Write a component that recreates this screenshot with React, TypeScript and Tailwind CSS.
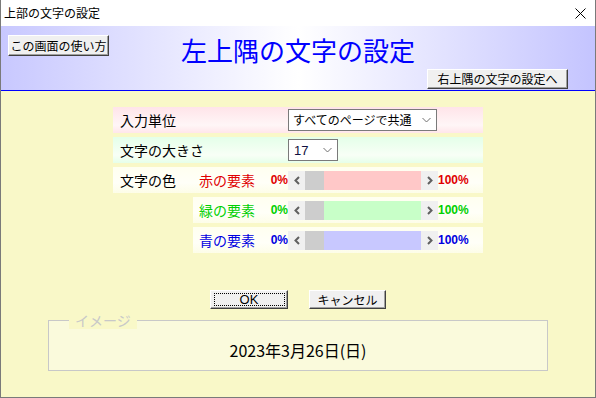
import React from "react";

const JP = "font-['Noto_Sans_CJK_JP',sans-serif]";
const AR = "font-['Liberation_Sans',Arial,sans-serif]";

function Chev({ dir }: { dir: "l" | "r" }) {
  return (
    <svg width="8" height="9" viewBox="0 0 8 9">
      <polyline
        points={dir === "l" ? "6,1 2.5,4.5 6,8" : "2,1 5.5,4.5 2,8"}
        fill="none"
        stroke="#606060"
        strokeWidth="2"
      />
    </svg>
  );
}

function DownChev() {
  return (
    <svg width="9" height="6" viewBox="0 0 9 6">
      <polyline points="0.5,1 4.5,5 8.5,1" fill="none" stroke="#707070" strokeWidth="1" />
    </svg>
  );
}

function ScrollBar({ track }: { track: string }) {
  return (
    <div className="flex h-[19px] w-[150px]">
      <div className="flex w-[17px] items-center justify-center bg-[#f0f0f0]">
        <Chev dir="l" />
      </div>
      <div className="w-[19px] bg-[#cdcdcd]" />
      <div className={`flex-1 ${track}`} />
      <div className="flex w-[17px] items-center justify-center bg-[#f0f0f0]">
        <Chev dir="r" />
      </div>
    </div>
  );
}

function ColorRow({
  label,
  color,
  track,
}: {
  label: string;
  color: string;
  track: string;
}) {
  return (
    <div className="flex items-center pl-[6px]">
      <div className="flex w-[89px] items-center justify-between">
        <span className={`${JP} text-[14px] leading-none ${color}`}>{label}</span>
        <span className={`${AR} text-[12px] font-bold leading-none ${color}`}>0%</span>
      </div>
      <ScrollBar track={track} />
      <span className={`${AR} text-[12px] font-bold leading-none ${color}`}>100%</span>
    </div>
  );
}

function ClassicButton({
  children,
  className = "",
  focus = false,
}: {
  children: React.ReactNode;
  className?: string;
  focus?: boolean;
}) {
  return (
    <div
      className={`flex items-center justify-center border border-t-white border-l-white border-r-[#404040] border-b-[#404040] bg-[#f0f0f0] shadow-[inset_-1px_-1px_#a0a0a0] ${className}`}
    >
      {focus ? (
        <div className="flex h-[calc(100%-4px)] w-[calc(100%-5px)] items-center justify-center border border-dotted border-black">
          {children}
        </div>
      ) : (
        children
      )}
    </div>
  );
}

export default function App() {
  return (
    <div className={`flex h-[398px] w-[596px] flex-col overflow-hidden border-x border-b border-[#7a7a7a] bg-[#f9f8c8] ${JP}`}>
      {/* title bar */}
      <div className="flex h-[26px] items-center justify-between bg-white pl-[3px] pr-[9px]">
        <span className="text-[12px] leading-none text-black">上部の文字の設定</span>
        <svg width="11" height="11" viewBox="0 0 11 11">
          <path d="M0.5 0.5 L10.5 10.5 M10.5 0.5 L0.5 10.5" stroke="#000" strokeWidth="1" />
        </svg>
      </div>

      {/* header */}
      <div className="flex h-[64px] flex-col bg-[linear-gradient(to_right,#c8c8ff,#ffffff_50%,#c4c4ff)] px-[7px]">
        <div className="grid h-[43px] grid-cols-[1fr_auto_1fr] items-start pt-[9px]">
          <ClassicButton className="h-[21px] w-[101px] justify-self-start">
            <span className="text-[12px] leading-none text-black">この画面の使い方</span>
          </ClassicButton>
          <div className="pt-[1px] text-[26px] leading-[28px] text-[#0000ff]">左上隅の文字の設定</div>
          <div />
        </div>
        <div className="flex justify-end pr-[20px]">
          <ClassicButton className="h-[20px] w-[141px]">
            <span className="text-[12px] leading-none text-black">右上隅の文字の設定へ</span>
          </ClassicButton>
        </div>
      </div>
      <div className="h-[1px] bg-[#0000ff]" />

      {/* body */}
      <div className="flex flex-1 flex-col items-center pt-[16px]">
        <div className="flex w-[370px] flex-col gap-[4px]">
          <div className="flex h-[26px] items-center bg-[linear-gradient(to_bottom,#ffe4e9,#fff6f7_70%,#ffe6ea)]">
            <span className="w-[175px] pl-[7px] text-[14px] leading-none text-black">入力単位</span>
            <div className="flex h-[22px] w-[149px] items-center justify-between border border-[#7a7a7a] bg-white pl-[4px] pr-[5px]">
              <span className="text-[12px] leading-none text-black">すべてのページで共通</span>
              <DownChev />
            </div>
          </div>
          <div className="flex h-[26px] items-center bg-[linear-gradient(to_bottom,#e4ffe9,#f8fff6_70%,#e6ffe9)]">
            <span className="w-[175px] pl-[7px] text-[14px] leading-none text-black">文字の大きさ</span>
            <div className="flex h-[22px] w-[50px] items-center justify-between border border-[#7a7a7a] bg-white pl-[5px] pr-[5px]">
              <span className={`${AR} text-[13px] leading-none text-[#101040]`}>17</span>
              <DownChev />
            </div>
          </div>
          <div className="flex h-[26px] items-center bg-[linear-gradient(to_bottom,#fffff0,#fffff8_60%,#fdfde8)]">
            <span className="w-[80px] pl-[7px] text-[14px] leading-none text-black">文字の色</span>
            <ColorRow label="赤の要素" color="text-[#e00000]" track="bg-[#ffc8c8]" />
          </div>
          <div className="ml-[80px] flex h-[26px] items-center bg-[linear-gradient(to_bottom,#fffff0,#fffff8_60%,#fdfde8)]">
            <ColorRow label="緑の要素" color="text-[#00d000]" track="bg-[#c8ffc8]" />
          </div>
          <div className="ml-[80px] flex h-[26px] items-center bg-[linear-gradient(to_bottom,#fffff0,#fffff8_60%,#fdfde8)]">
            <ColorRow label="青の要素" color="text-[#0000e0]" track="bg-[#c8c8ff]" />
          </div>
        </div>

        <div className="mt-[37px] flex gap-[21px]">
          <ClassicButton className="h-[19px] w-[78px]" focus>
            <span className={`${AR} text-[13px] leading-none text-black`}>OK</span>
          </ClassicButton>
          <ClassicButton className="h-[19px] w-[77px]">
            <span className="text-[12px] leading-none text-black">キャンセル</span>
          </ClassicButton>
        </div>

        <div className="relative mt-[11px] flex h-[51px] w-[500px] items-center justify-center border border-[#c8c8c8] bg-[#fafadc] pt-[8px]">
          <span className="absolute left-[20px] top-[-10px] bg-[#f9f8c8] px-[6px] text-[14px] leading-[18px] text-[#c8c8c8]">
            イメージ
          </span>
          <span className="text-[16px] leading-none text-black">2023年3月26日(日)</span>
        </div>
      </div>
    </div>
  );
}
